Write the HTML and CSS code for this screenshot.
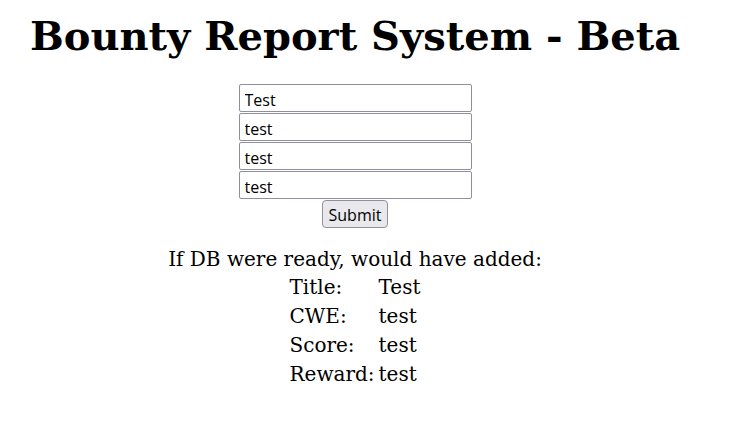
FILE: index.html
```html
<!DOCTYPE html>
<html>
<head>
<meta charset="utf-8">
<link rel="stylesheet" href="styles.css">
</head>
<body>
<div class="page">
  <h1 class="title">Bounty Report System - Beta</h1>
  <form class="report-form">
    <input class="field" type="text" value="Test">
    <input class="field" type="text" value="test">
    <input class="field" type="text" value="test">
    <input class="field" type="text" value="test">
    <button class="submit" type="button">Submit</button>
  </form>
  <div class="result">
    <p class="intro">If DB were ready, would have added:</p>
    <table class="details">
      <tr><td>Title:</td><td>Test</td></tr>
      <tr><td>CWE:</td><td>test</td></tr>
      <tr><td>Score:</td><td>test</td></tr>
      <tr><td>Reward:</td><td>test</td></tr>
    </table>
  </div>
</div>
</body>
</html>
```

FILE: styles.css
```css
html, body {
  margin: 0;
  background: #fff;
}
body {
  padding: 8px;
  font-family: "DejaVu Serif", serif;
  color: #000;
}
.page {
  width: 694px;
  text-align: center;
}
.title {
  margin: 4px 0 0;
  font-size: 40px;
  font-weight: bold;
  line-height: 48px;
}
.report-form {
  display: flex;
  flex-direction: column;
  align-items: center;
  margin-top: 24px;
  gap: 1px;
}
.field {
  box-sizing: border-box;
  width: 233px;
  height: 28px;
  margin: 0;
  padding: 3px 5px 0;
  border: 1px solid #8f8f9d;
  border-radius: 2px;
  font-family: "Open Sans", sans-serif;
  font-size: 16px;
  color: #000;
}
.submit {
  box-sizing: border-box;
  height: 28px;
  margin-top: 0;
  padding: 1px 6px 0;
  border: 1px solid #8f8f9d;
  border-radius: 4px;
  background: #e9e9ed;
  font-family: "Open Sans", sans-serif;
  font-size: 16px;
  color: #000;
}
.result {
  margin-top: 18px;
  font-size: 20px;
}
.intro {
  margin: 0;
  line-height: 27px;
}
.details {
  margin: 0 auto;
  border-collapse: separate;
  border-spacing: 2px 0;
  text-align: left;
}
.details td {
  padding: 0 1px;
  height: 29px;
  line-height: 29px;
}
```
